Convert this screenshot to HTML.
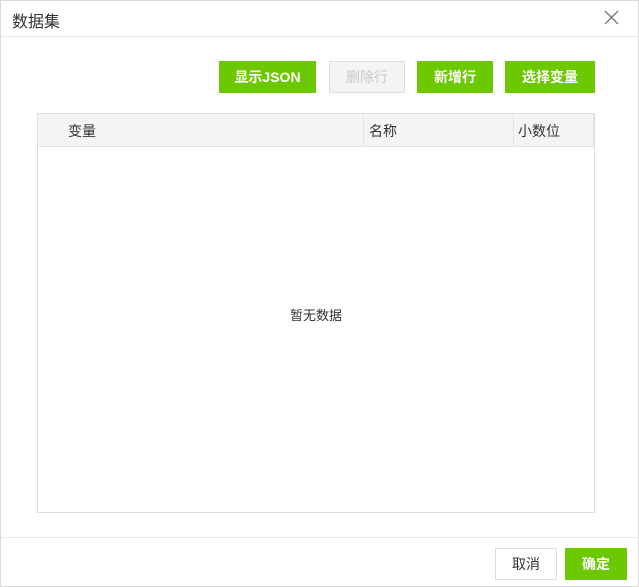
<!DOCTYPE html>
<html><head><meta charset="utf-8"><style>
*{margin:0;padding:0;box-sizing:border-box}
body{width:639px;height:587px;background:#fff;font-family:"Liberation Sans","Noto Sans CJK SC",sans-serif;position:relative;overflow:hidden}
.frame{position:absolute;left:0;top:0;width:639px;height:587px;border:1px solid #d9d9d9}
.abs{position:absolute}
.btn{position:absolute;height:32px;color:#fff;background:#6cc800;font-size:14px;font-weight:bold;display:flex;align-items:center;justify-content:center}
</style></head><body>
<div class="frame"></div>
<div class="abs" style="left:12px;top:8px;font-size:16px;color:#333">数据集</div>
<svg class="abs" style="left:604px;top:10px" width="15" height="15"><path d="M1 1L14 14M14 1L1 14" stroke="#777" stroke-width="1.3"/></svg>
<div class="abs" style="left:1px;top:36px;width:637px;height:1px;background:#e8e8e8"></div>
<div class="btn" style="left:219px;top:61px;width:97px">显示JSON</div>
<div class="btn" style="left:329px;top:61px;width:76px;background:#f4f4f4;border:1px solid #ddd;color:#c8c8c8;font-weight:normal">删除行</div>
<div class="btn" style="left:417px;top:61px;width:76px">新增行</div>
<div class="btn" style="left:505px;top:61px;width:90px">选择变量</div>
<div class="abs" style="left:37px;top:113px;width:558px;height:400px;border:1px solid #ddd"></div>
<div class="abs" style="left:38px;top:114px;width:556px;height:33px;background:#f4f4f4;border-bottom:1px solid #e2e2e2"></div>
<div class="abs" style="left:363px;top:114px;width:1px;height:32px;background:#e2e2e2"></div>
<div class="abs" style="left:513px;top:114px;width:1px;height:32px;background:#e2e2e2"></div>
<div class="abs" style="left:593px;top:114px;width:1px;height:32px;background:#e2e2e2"></div>
<div class="abs" style="left:68px;top:121px;font-size:14px;color:#333">变量</div>
<div class="abs" style="left:369px;top:121px;font-size:14px;color:#333">名称</div>
<div class="abs" style="left:518px;top:121px;font-size:14px;color:#333">小数位</div>
<div class="abs" style="left:290px;top:305px;font-size:13px;color:#333">暂无数据</div>
<div class="abs" style="left:1px;top:537px;width:637px;height:1px;background:#e8e8e8"></div>
<div class="btn" style="left:495px;top:548px;width:62px;background:#fff;border:1px solid #ddd;color:#333;font-weight:normal">取消</div>
<div class="btn" style="left:565px;top:548px;width:62px">确定</div>
</body></html>
